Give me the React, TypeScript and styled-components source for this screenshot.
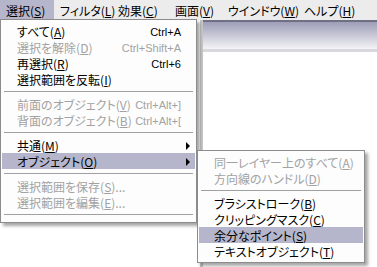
import React from 'react';
import styled, { createGlobalStyle } from 'styled-components';

const GlobalStyle = createGlobalStyle`
  html, body {
    margin: 0;
    padding: 0;
    background: #ffffff;
  }
  body {
    font-family: "Noto Sans CJK JP", "Liberation Sans", sans-serif;
    font-size: 12px;
    font-feature-settings: "palt" 1;
    color: #000;
  }
`;

const Screen = styled.div`
  width: 377px;
  height: 267px;
  position: relative;
  overflow: hidden;
  background: #ffffff;
`;

const MenuBar = styled.div`
  display: flex;
  height: 20px;
  background: #ececec;
`;

const BarItem = styled.div<{ $w: number; $active?: boolean }>`
  width: ${(p) => p.$w}px;
  height: 20px;
  box-sizing: border-box;
  padding-left: 6px;
  display: flex;
  align-items: center;
  white-space: nowrap;
  background: ${(p) => (p.$active ? '#b5b5cb' : 'transparent')};
`;

const Desktop = styled.div`
  display: flex;
  height: 247px;
`;

const Blank = styled.div`
  width: 200px;
  background: #ffffff;
`;

const DocWindow = styled.div`
  flex: 1;
  border-left: 3px solid #c8c8c8;
  background: #ffffff;
`;

const TitleBar = styled.div`
  height: 27px;
  border-top: 2px solid #707084;
  border-bottom: 3px solid #d8d8de;
  background: linear-gradient(#9e9eb8, #c4c4d4 45%, #f4f4f6);
`;

const Menu = styled.div<{ $top: number; $left: number; $width: number }>`
  position: absolute;
  top: ${(p) => p.$top}px;
  left: ${(p) => p.$left}px;
  width: ${(p) => p.$width}px;
  box-sizing: border-box;
  padding: 3px 1px 3px 1px;
  background: #fdfdfd;
  border: 1px solid #8c8c8c;
  box-shadow: 3px 3px 3px rgba(0, 0, 0, 0.35);
`;

const Row = styled.div<{ $hl?: boolean; $off?: boolean; $indent: number }>`
  display: grid;
  grid-template-columns: 1fr auto 14px;
  align-items: center;
  height: 16px;
  padding-left: ${(p) => p.$indent}px;
  white-space: nowrap;
  background: ${(p) => (p.$hl ? '#b5b5cb' : 'transparent')};
  color: ${(p) => (p.$off ? '#a2a2a2' : '#000')};
`;

const Shortcut = styled.span`
  font-family: "Liberation Sans", sans-serif;
  font-size: 11px;
`;

const Arrow = styled.span`
  justify-self: center;
  width: 0;
  height: 0;
  border-top: 4px solid transparent;
  border-bottom: 4px solid transparent;
  border-left: 4px solid #000;
`;

const Separator = styled.div`
  height: 1px;
  margin: 4px 2px 4px 2px;
  background: #a0a0a0;
`;

type Item =
  | { sep: true }
  | { label: string; key: string; tail?: string; shortcut?: string; off?: boolean; sub?: boolean; hl?: boolean };

const Label: React.FC<{ label: string; k: string; tail?: string }> = ({ label, k, tail }) => (
  <span>
    {label}(<u>{k}</u>){tail}
  </span>
);

const bar = [
  { label: '選択', k: 'S', w: 54, active: true },
  { label: 'フィルタ', k: 'L', w: 58 },
  { label: '効果', k: 'C', w: 57 },
  { label: '画面', k: 'V', w: 53 },
  { label: 'ウインドウ', k: 'W', w: 76 },
  { label: 'ヘルプ', k: 'H', w: 79 },
];

const mainItems: Item[] = [
  { label: 'すべて', key: 'A', shortcut: 'Ctrl+A' },
  { label: '選択を解除', key: 'D', shortcut: 'Ctrl+Shift+A', off: true },
  { label: '再選択', key: 'R', shortcut: 'Ctrl+6' },
  { label: '選択範囲を反転', key: 'I' },
  { sep: true },
  { label: '前面のオブジェクト', key: 'V', shortcut: 'Ctrl+Alt+]', off: true },
  { label: '背面のオブジェクト', key: 'B', shortcut: 'Ctrl+Alt+[', off: true },
  { sep: true },
  { label: '共通', key: 'M', sub: true },
  { label: 'オブジェクト', key: 'O', sub: true, hl: true },
  { sep: true },
  { label: '選択範囲を保存', key: 'S', tail: '...', off: true },
  { label: '選択範囲を編集', key: 'E', tail: '...', off: true },
  { sep: true },
];

const subItems: Item[] = [
  { label: '同一レイヤー上のすべて', key: 'A', off: true },
  { label: '方向線のハンドル', key: 'D', off: true },
  { sep: true },
  { label: 'ブラシストローク', key: 'B' },
  { label: 'クリッピングマスク', key: 'C' },
  { label: '余分なポイント', key: 'S', hl: true },
  { label: 'テキストオブジェクト', key: 'T' },
];

const MenuList: React.FC<{ items: Item[]; indent: number }> = ({ items, indent }) => (
  <>
    {items.map((it, i) =>
      'sep' in it ? (
        <Separator key={i} />
      ) : (
        <Row key={i} $hl={it.hl} $off={it.off} $indent={indent}>
          <Label label={it.label} k={it.key} tail={it.tail} />
          <Shortcut>{it.shortcut}</Shortcut>
          {it.sub ? <Arrow /> : <span />}
        </Row>
      )
    )}
  </>
);

const App: React.FC = () => {
  return (
    <Screen>
      <GlobalStyle />
      <MenuBar>
        {bar.map((b) => (
          <BarItem key={b.k} $w={b.w} $active={b.active}>
            {b.label}(<u>{b.k}</u>)
          </BarItem>
        ))}
      </MenuBar>
      <Desktop>
        <Blank />
        <DocWindow>
          <TitleBar />
        </DocWindow>
      </Desktop>
      <Menu $top={19} $left={0} $width={197}>
        <MenuList items={mainItems} indent={15} />
      </Menu>
      <Menu $top={150} $left={197} $width={168}>
        <MenuList items={subItems} indent={15} />
      </Menu>
    </Screen>
  );
};

export default App;
